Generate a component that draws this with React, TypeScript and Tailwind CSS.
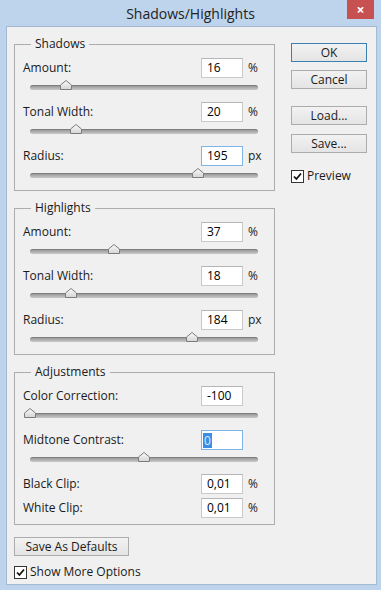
import React from 'react';

const font = "font-['Open_Sans',sans-serif]";

type Row =
  | { kind: 'slider'; label: string; value: string; unit?: string; pos: number; focused?: boolean; selected?: boolean }
  | { kind: 'field'; label: string; value: string; unit?: string };

const shadows: Row[] = [
  { kind: 'slider', label: 'Amount:', value: '16', unit: '%', pos: 0.16 },
  { kind: 'slider', label: 'Tonal Width:', value: '20', unit: '%', pos: 0.2 },
  { kind: 'slider', label: 'Radius:', value: '195', unit: 'px', pos: 0.737, focused: true },
];

const highlights: Row[] = [
  { kind: 'slider', label: 'Amount:', value: '37', unit: '%', pos: 0.37 },
  { kind: 'slider', label: 'Tonal Width:', value: '18', unit: '%', pos: 0.18 },
  { kind: 'slider', label: 'Radius:', value: '184', unit: 'px', pos: 0.71 },
];

const adjustments: Row[] = [
  { kind: 'slider', label: 'Color Correction:', value: '-100', pos: 0 },
  { kind: 'slider', label: 'Midtone Contrast:', value: '0', pos: 0.5, selected: true },
  { kind: 'field', label: 'Black Clip:', value: '0,01', unit: '%' },
  { kind: 'field', label: 'White Clip:', value: '0,01', unit: '%' },
];

function Thumb({ pos }: { pos: number }) {
  return (
    <svg
      width="12"
      height="10"
      viewBox="0 0 12 10"
      className="absolute top-[2px]"
      style={{ left: `calc(${pos * 100}% - 6px)` }}
    >
      <defs>
        <linearGradient id="thumbFill" x1="0" y1="0" x2="0" y2="1">
          <stop offset="0" stopColor="#fbfbfb" />
          <stop offset="1" stopColor="#d4d4d4" />
        </linearGradient>
      </defs>
      <polygon points="0.5,9.5 0.5,5 6,0.5 11.5,5 11.5,9.5" fill="url(#thumbFill)" stroke="#7c7c7c" />
    </svg>
  );
}

function Slider({ pos }: { pos: number }) {
  return (
    <div className="relative ml-[7px] h-[24px] w-[228px] pt-[7px]">
      <div className="h-[5px] rounded-full border-t border-[#7e7e7e] bg-linear-to-b from-[#9a9a9a] to-[#c9c9c9]" />
      <Thumb pos={pos} />
    </div>
  );
}

function NumberBox({ value, focused, selected }: { value: string; focused?: boolean; selected?: boolean }) {
  return (
    <div
      className={
        'flex h-[20px] w-[42px] items-center border bg-white pl-[5px] text-[12px] text-black ' +
        (focused || selected ? 'border-[#7eb4ea]' : 'border-[#c9c9c9] border-t-[#b5b5b5]')
      }
    >
      {selected ? <span className="-ml-[4px] bg-[#3a8ee6] px-[1px] leading-[15px] text-[#dcecff]">{value}</span> : value}
    </div>
  );
}

function RowView({ row }: { row: Row }) {
  return (
    <div>
      <div className="flex h-[20px] items-center">
        <span className="flex-1 text-[12px] text-[#1a1a1a]">{row.label}</span>
        <NumberBox
          value={row.value}
          focused={row.kind === 'slider' && row.focused}
          selected={row.kind === 'slider' && row.selected}
        />
        <span className="w-[25px] pl-[5px] text-[12px] text-[#1a1a1a]">{row.unit}</span>
      </div>
      {row.kind === 'slider' && <Slider pos={row.pos} />}
    </div>
  );
}

function Group({ title, rows, className }: { title: string; rows: Row[]; className?: string }) {
  return (
    <div className={'relative w-[261px] border border-[#adadad] pl-[8px] pr-[6px] pt-[13px] ' + (className ?? '')}>
      <span className="absolute -top-[9px] left-[16px] bg-[#f0f0f0] px-[4px] text-[12px] leading-[16px] text-[#1a1a1a]">
        {title}
      </span>
      <div className="flex flex-col">
        {rows.map((r, i) => (
          <div key={i} className={r.kind === 'field' && i > 0 && rows[i - 1].kind === 'field' ? 'mt-[4px]' : ''}>
            <RowView row={r} />
          </div>
        ))}
      </div>
    </div>
  );
}

function Button({ children, primary, className }: { children: React.ReactNode; primary?: boolean; className?: string }) {
  return (
    <div
      className={
        'flex h-[19px] items-center justify-center border bg-linear-to-b from-[#f2f2f2] to-[#e4e4e4] text-[12px] text-[#1a1a1a] ' +
        (primary ? 'border-[#3c7fb1]' : 'border-[#acacac]') +
        ' ' +
        (className ?? '')
      }
    >
      {children}
    </div>
  );
}

function Checkbox({ label }: { label: string }) {
  return (
    <div className="flex items-center gap-[3px]">
      <div className="flex h-[13px] w-[13px] items-center justify-center border border-[#333] bg-white">
        <svg width="9" height="9" viewBox="0 0 9 9">
          <path d="M1 4.5 L3.4 7 L8 1.5" fill="none" stroke="#111" strokeWidth="1.8" />
        </svg>
      </div>
      <span className="text-[12px] leading-[16px] text-[#1a1a1a]">{label}</span>
    </div>
  );
}

export default function App() {
  return (
    <div className={'flex h-[590px] w-[381px] flex-col overflow-hidden bg-[#bdd4ec] ' + font}>
      <div className="relative flex h-[26px] shrink-0 items-center justify-center">
        <span className="text-[14px] text-[#222]">Shadows/Highlights</span>
        <div className="absolute right-[7px] top-0 flex h-[19px] w-[27px] items-center justify-center bg-[#c75050] text-[14px] font-bold leading-none text-white">
          ×
        </div>
      </div>
      <div className="mb-[5px] ml-[6px] mr-[4px] flex min-h-0 flex-1 border border-[#a3b9d2] bg-[#f0f0f0]">
        <div className="flex flex-col pl-[7px] pt-[17px]">
          <Group title="Shadows" rows={shadows} />
          <Group title="Highlights" rows={highlights} className="mt-[17px]" />
          <Group title="Adjustments" rows={adjustments} className="mt-[17px] pb-[6px]" />
          <Button className="mt-[12px] w-[115px]">Save As Defaults</Button>
          <div className="mt-[8px]">
            <Checkbox label="Show More Options" />
          </div>
        </div>
        <div className="ml-[16px] flex w-[76px] flex-col pt-[16px]">
          <Button primary>OK</Button>
          <Button className="mt-[8px]">Cancel</Button>
          <Button className="mt-[17px]">Load...</Button>
          <Button className="mt-[9px]">Save...</Button>
          <div className="mt-[15px]">
            <Checkbox label="Preview" />
          </div>
        </div>
      </div>
    </div>
  );
}
